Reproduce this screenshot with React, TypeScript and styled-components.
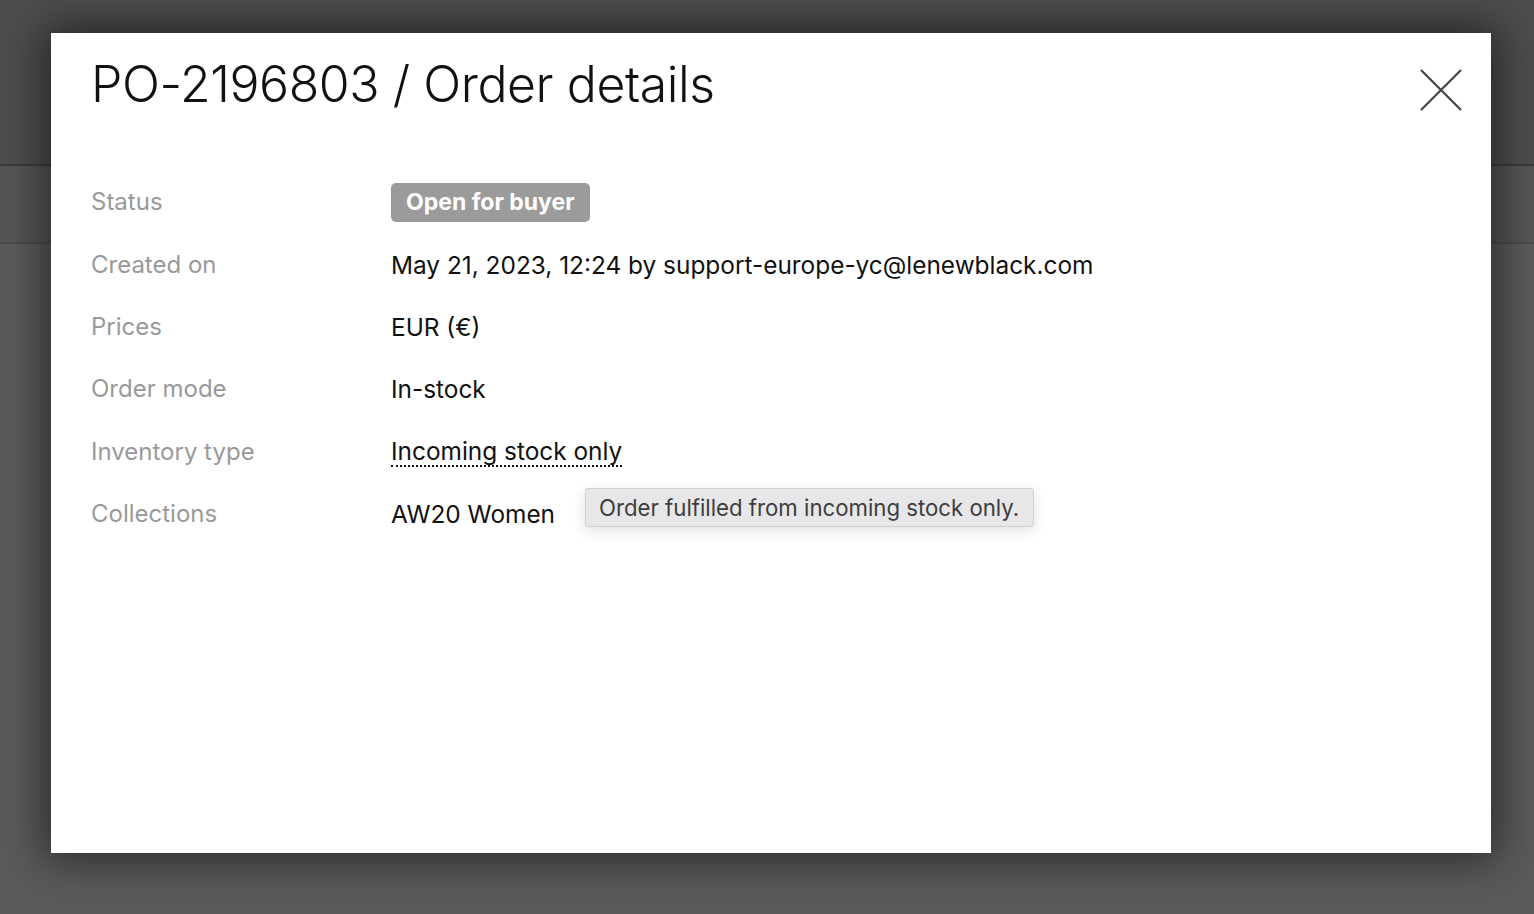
import React from "react";
import styled, { createGlobalStyle } from "styled-components";

const Global = createGlobalStyle`
  html, body { margin: 0; padding: 0; }
  body {
    width: 1534px;
    height: 914px;
    overflow: hidden;
    background: #595959;
    font-family: Inter, "Liberation Sans", sans-serif;
  }
`;

const Page = styled.div`
  position: relative;
  width: 1534px;
  height: 914px;
  background: #5a5a5a;
`;

const BgHeader = styled.div`
  height: 164px;
  border-bottom: 2px solid #3b3b3b;
  background: #4d4d4d;
`;

const BgSubHeader = styled.div`
  height: 76px;
  border-bottom: 2px solid #4c4c4c;
  background: #555555;
`;

const Overlay = styled.div`
  position: absolute;
  inset: 0;
  padding: 33px 0 0 51px;
  box-sizing: border-box;
`;

const Modal = styled.div`
  width: 1440px;
  height: 820px;
  background: #ffffff;
  box-sizing: border-box;
  padding: 28px 40px 0 40px;
  box-shadow: 0 0 40px 6px rgba(0, 0, 0, 0.55);
  display: flex;
  flex-direction: column;
`;

const Header = styled.div`
  display: flex;
  justify-content: space-between;
  align-items: flex-start;
`;

const Title = styled.h1`
  margin: 0;
  font-family: Inter, "Liberation Sans", sans-serif;
  font-weight: 300;
  font-size: 50px;
  line-height: 1;
  color: #111;
  letter-spacing: -0.45px;
  margin-top: -2px;
`;

const CloseButton = styled.button`
  border: none;
  background: none;
  padding: 0;
  margin: 7px -12px 0 0;
  width: 44px;
  height: 44px;
  cursor: pointer;
  display: flex;
  align-items: center;
  justify-content: center;
`;

const Details = styled.div`
  margin-top: 59px;
  display: grid;
  grid-template-columns: 300px 1fr;
  grid-auto-rows: 62.4px;
  align-items: center;
`;

const Label = styled.div`
  color: #999999;
  font-size: 24px;
  line-height: 30px;
`;

const Value = styled.div`
  color: #111111;
  font-size: 24.4px;
  line-height: 30px;
  display: flex;
  align-items: center;
  position: relative;
`;

const Badge = styled.span`
  display: inline-block;
  background: #9b9b9b;
  color: #ffffff;
  font-weight: 700;
  font-size: 23px;
  line-height: 39px;
  padding: 0 15px;
  border-radius: 5px;
`;

const Dotted = styled.span`
  border-bottom: 2px dotted #111;
  line-height: 28px;
`;

const Tooltip = styled.div`
  position: absolute;
  left: 194px;
  top: -11px;
  background: #e7e6e9;
  border: 1px solid #d0d0d2;
  border-radius: 3px;
  color: #3d3d3d;
  font-size: 22.2px;
  line-height: 37px;
  padding: 0 14px 0 13px;
  white-space: nowrap;
  box-shadow: 0 4px 14px rgba(0, 0, 0, 0.12);
`;

const rows: { label: string; value: React.ReactNode }[] = [
  { label: "Status", value: <Badge>Open for buyer</Badge> },
  {
    label: "Created on",
    value: "May 21, 2023, 12:24 by support-europe-yc@lenewblack.com",
  },
  { label: "Prices", value: "EUR (€)" },
  { label: "Order mode", value: "In-stock" },
  { label: "Inventory type", value: <Dotted>Incoming stock only</Dotted> },
  {
    label: "Collections",
    value: (
      <>
        AW20 Women
        <Tooltip>Order fulfilled from incoming stock only.</Tooltip>
      </>
    ),
  },
];

export default function App() {
  return (
    <>
      <Global />
      <Page>
        <BgHeader />
        <BgSubHeader />
        <Overlay>
          <Modal>
            <Header>
              <Title>PO-2196803 / Order details</Title>
              <CloseButton aria-label="Close">
                <svg width="42" height="42" viewBox="0 0 42 42">
                  <path
                    d="M1 1 L41 41 M41 1 L1 41"
                    stroke="#444"
                    strokeWidth="2.2"
                    fill="none"
                  />
                </svg>
              </CloseButton>
            </Header>
            <Details>
              {rows.map((r) => (
                <React.Fragment key={r.label}>
                  <Label>{r.label}</Label>
                  <Value>{r.value}</Value>
                </React.Fragment>
              ))}
            </Details>
          </Modal>
        </Overlay>
      </Page>
    </>
  );
}
